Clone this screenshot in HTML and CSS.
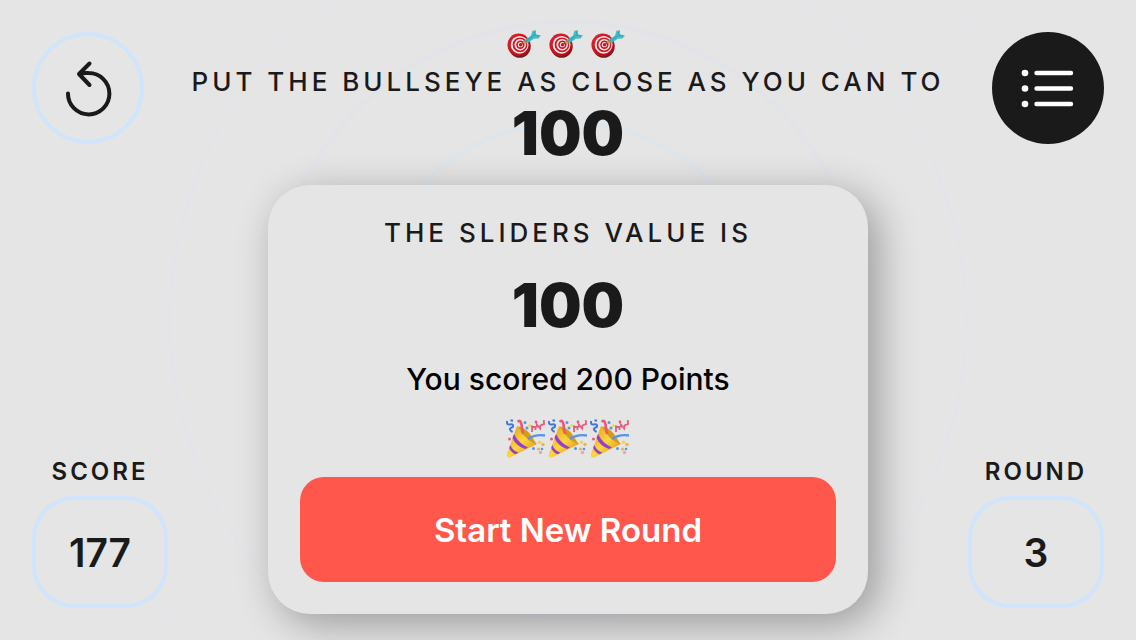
FILE: index.html
```html
<!DOCTYPE html>
<html lang="en">
<head>
<meta charset="utf-8">
<meta name="viewport" content="width=device-width, initial-scale=1">
<title>Bullseye</title>
<link rel="stylesheet" href="styles.css">
</head>
<body>
<svg class="symbols" aria-hidden="true">
  <defs>
    <linearGradient id="rim" x1="0" y1="0" x2="1" y2="1"><stop offset="0" stop-color="#e8202c"/><stop offset="1" stop-color="#a80d18"/></linearGradient>
    <linearGradient id="cone" x1="0" y1="0" x2="1" y2="1"><stop offset="0" stop-color="#d99a16"/><stop offset=".5" stop-color="#ffd53c"/><stop offset="1" stop-color="#c98a12"/></linearGradient>
    <radialGradient id="fade" gradientUnits="userSpaceOnUse" cx="600" cy="600" r="600">
      <stop offset=".2" stop-color="#cfe5fb" stop-opacity=".4"/>
      <stop offset=".34" stop-color="#cfe5fb" stop-opacity=".34"/>
      <stop offset=".5" stop-color="#d4dff8" stop-opacity=".24"/>
      <stop offset=".67" stop-color="#d2e2f8" stop-opacity=".16"/>
      <stop offset="1" stop-color="#d2e2f8" stop-opacity=".04"/>
    </radialGradient>
    <symbol id="target" viewBox="0 0 34 28">
      <ellipse cx="12.7" cy="16.2" rx="11" ry="11.6" fill="#7b1a1c"/>
      <ellipse cx="11.7" cy="14.8" rx="11.3" ry="11.2" fill="url(#rim)"/>
      <ellipse cx="12.6" cy="14.8" rx="8.9" ry="8.9" fill="#f8eeee"/>
      <ellipse cx="13" cy="14.8" rx="7.4" ry="7.4" fill="#d31b28"/>
      <ellipse cx="13.2" cy="14.7" rx="5.7" ry="5.7" fill="#f8eeee"/>
      <ellipse cx="13.4" cy="14.7" rx="4.2" ry="4.2" fill="#c51622"/>
      <ellipse cx="13.4" cy="14.7" rx="2.6" ry="2.6" fill="#f3dcdc"/>
      <ellipse cx="13.6" cy="14.7" rx="1.7" ry="1.7" fill="#c51622"/>
      <path d="M14 14.5 18 11.4" stroke="#8a4a2a" stroke-width="1.5"/>
      <path d="M16.3 10.2 20 13 17.8 14.2 16 12.6Z" fill="#dda01d"/>
      <path d="M17.5 10.6 24.8 5 28.4 7.4 20.4 13.2Z" fill="#3bbac4"/>
      <path d="M24 5.8 25.4 .8 29 .2 28.9 4.2 34 5.4 31.5 8.4 26.8 8.8Z" fill="#47bfc9"/>
      <path d="M18.5 11.5 28.7 4.3 M27 5.5 27.7 1.5 M28 5.8 32 5.9" fill="none" stroke="#2d9dab" stroke-width=".8"/>
    </symbol>
    <symbol id="party" viewBox="0 0 40 40">
      <path d="M11 7Q21 12 31 25L5 38Q0 40 1 35Z" fill="url(#cone)"/>
      <path d="M12 7.5Q18 20 30 25.5Q23 9 12 7.5Z" fill="#d79a1d"/>
      <path d="M8 15Q13 25 22 28.4L19 30Q10 27 6.5 19Z M4.2 26Q7 32 12.5 33.7L9.5 35.3Q5 33.5 3.2 29Z" fill="#943fd3"/>
      <path d="M17 15Q16 9 15.4 5Q14-.2 11.8 3" fill="none" stroke="#ed5775" stroke-width="2.6"/>
      <path d="M22 20Q29 15 39 16.5" fill="none" stroke="#5793eb" stroke-width="2.4"/>
      <path d="M1.2 2Q.2 6 4 5.5Q8 4.5 6.8 8Q1 10 6.6 13M4.5 1.2 7 1.8" fill="none" stroke="#3f77e0" stroke-width="2"/>
      <path d="M26 13V8H29.5V11M31 8.5 30.8 5.5 34.2 9.5 34.5 6.5 38 5.2 37.8 1" fill="none" stroke="#e65f80" stroke-width="1.8"/>
      <g fill="#e85a7b"><circle cx="30" cy="3" r="1.4"/><circle cx="3.5" cy="20" r="1.5"/><circle cx="34.5" cy="33.5" r="1.7" fill="#eba2bb"/><circle cx="26" cy="7.2" r="1"/></g>
      <g fill="#4e99e9"><circle cx="19" cy="3.4" r="1.5"/><circle cx="21" cy="9" r="1.5"/><circle cx="27.5" cy="29.5" r="1.5"/><circle cx="36" cy="30" r="1.3"/></g>
      <g fill="#efb34d"><circle cx="37" cy="25.5" r="1.7"/><circle cx="32.5" cy="30" r="1.6"/><circle cx="33.5" cy="23.2" r="1.7" fill="#e8d74d"/><circle cx="23.5" cy="6.5" r="1.5" fill="#edda52"/></g>
    </symbol>
  </defs>
</svg>

<svg class="rings" viewBox="32 280 1136 640" preserveAspectRatio="xMidYMid slice" aria-hidden="true">
  <g fill="none" stroke="url(#fade)" stroke-width="4">
    <circle cx="600" cy="600" r="98"/>
    <circle cx="600" cy="600" r="198"/>
    <circle cx="600" cy="600" r="298"/>
    <circle cx="600" cy="600" r="398"/>
    <circle cx="600" cy="600" r="498"/>
  </g>
</svg>

<main class="game">
  <aside class="side">
    <button class="round-button" type="button" aria-label="Start over">
      <svg class="icon" viewBox="0 0 112 112" fill="none" stroke="currentColor" stroke-width="4" stroke-linecap="round" stroke-linejoin="round">
        <path d="M36 61.5A20.7 20.7 0 1 0 56.7 41Q51 40.600 47.500 42M57.5 31.500 47 42 57.5 53"/>
      </svg>
    </button>
    <div class="stat">
      <span class="stat-label">SCORE</span>
      <output class="stat-value">177</output>
    </div>
  </aside>

  <section class="centre">
    <header class="goal">
      <div class="targets" role="img" aria-label="Three targets">
        <svg class="target"><use href="#target"/></svg>
        <svg class="target"><use href="#target"/></svg>
        <svg class="target"><use href="#target"/></svg>
      </div>
      <h1 class="caption">PUT THE BULLSEYE AS CLOSE AS YOU CAN TO</h1>
      <p class="big-number">100</p>
    </header>

    <div class="card" role="dialog" aria-labelledby="result-title">
      <h2 class="caption" id="result-title">THE SLIDERS VALUE IS</h2>
      <p class="big-number">100</p>
      <p class="points">You scored 200 Points</p>
      <div class="poppers" role="img" aria-label="Three party poppers">
        <svg class="popper"><use href="#party"/></svg>
        <svg class="popper"><use href="#party"/></svg>
        <svg class="popper"><use href="#party"/></svg>
      </div>
      <button class="start" type="button">Start New Round</button>
    </div>
  </section>

  <aside class="side side-right">
    <button class="round-button filled" type="button" aria-label="Leaderboard">
      <svg class="icon" viewBox="0 0 112 112" fill="none" stroke="currentColor" stroke-width="4.4" stroke-linecap="round">
        <path d="M44.500 41H79M44.500 56.5H79M44.500 72H79"/>
        <g fill="currentColor" stroke="none"><circle cx="33" cy="41" r="3.3"/><circle cx="33" cy="56.5" r="3.3"/><circle cx="33" cy="72" r="3.3"/></g>
      </svg>
    </button>
    <div class="stat">
      <span class="stat-label">ROUND</span>
      <output class="stat-value">3</output>
    </div>
  </aside>
</main>
</body>
</html>
```

FILE: styles.css
```css
* {
  box-sizing: border-box;
}

body {
  margin: 0;
  min-height: 100vh;
  position: relative;
  background: #e5e5e5;
  color: #1a1a1a;
  font-family: Inter, "Liberation Sans", sans-serif;
}

h1, h2, p {
  margin: 0;
}

button {
  padding: 0;
  border: 0;
  font: inherit;
  cursor: pointer;
}

.symbols {
  position: absolute;
  width: 0;
  height: 0;
}

.rings {
  position: absolute;
  inset: 0;
  width: 100%;
  height: 100%;
}

.game {
  position: relative;
  display: flex;
  min-height: 100vh;
  padding: 0 32px;
}

.side {
  flex: 0 0 136px;
  display: flex;
  flex-direction: column;
  justify-content: space-between;
  align-items: flex-start;
  padding: 32px 0;
}

.side-right {
  align-items: flex-end;
}

.round-button {
  width: 112px;
  height: 112px;
  border-radius: 50%;
  box-shadow: inset 0 0 0 4px #d0e5fb;
  background: transparent;
  color: #1a1a1a;
}

.filled {
  background: #1a1a1a;
  box-shadow: none;
  color: #fff;
}

.icon {
  display: block;
  width: 100%;
  height: 100%;
}

.stat {
  display: flex;
  flex-direction: column;
  gap: 8px;
  width: 100%;
  text-align: center;
}

.stat-label {
  font-size: 24px;
  line-height: 32px;
  font-weight: 560;
  letter-spacing: 3px;
}

.stat-value {
  display: flex;
  align-items: center;
  justify-content: center;
  height: 112px;
  border: 4px solid #d0e5fb;
  border-radius: 42px;
  font-size: 39px;
  font-weight: 600;
}

.centre {
  flex: 1;
  display: flex;
  flex-direction: column;
  align-items: center;
  justify-content: space-between;
  padding: 28px 0 26px;
}

.goal {
  text-align: center;
}

.targets,
.poppers {
  display: flex;
  justify-content: center;
}

.targets {
  gap: 8px;
  padding: 2px 4px 2px 0;
  margin-bottom: 6px;
}

.target {
  width: 34px;
  height: 28px;
}

.caption {
  font-size: 26px;
  line-height: 32px;
  font-weight: 540;
  letter-spacing: 4px;
  white-space: nowrap;
}

.big-number {
  font-size: 60px;
  line-height: 70px;
  font-weight: 900;
}

.card {
  display: flex;
  flex-direction: column;
  width: 600px;
  max-width: 100%;
  padding: 32px;
  border-radius: 42px;
  background: #e5e5e5;
  box-shadow: 10px 10px 40px rgba(0, 0, 0, 0.33);
  text-align: center;
}

.card .big-number {
  margin: 21px 0;
}

.points {
  color: #000;
  font-size: 30px;
  line-height: 36px;
  font-weight: 500;
}

.poppers {
  gap: 2px;
  margin: 22px 0 18px;
}

.popper {
  width: 40px;
  height: 40px;
}

.start {
  height: 105px;
  border-radius: 24px;
  background: #ff574b;
  color: #fff;
  font-size: 33px;
  font-weight: 600;
}
```
